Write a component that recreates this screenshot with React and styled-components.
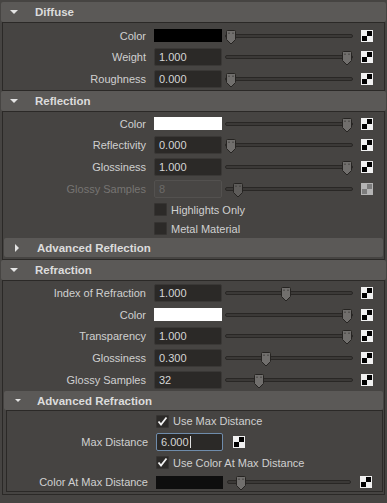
import React from "react";
import styled, { createGlobalStyle } from "styled-components";

const C = {
  bg: "#464442",
  header: "#5b5957",
  line: "#2b2927",
  field: "#2b2927",
  fieldBorder: "#3a3836",
  text: "#d0d0d0",
  headText: "#dcdcdc",
  dim: "#767472",
};

const Global = createGlobalStyle`
  html, body { margin: 0; padding: 0; background: ${C.bg}; }
  body {
    font-family: "Liberation Sans", Arial, sans-serif;
    font-size: 11px;
    color: ${C.text};
  }
`;

const Page = styled.div`
  width: 387px;
  height: 503px;
  overflow: hidden;
  box-sizing: border-box;
  padding-top: 2px;
  background: ${C.bg};
  display: flex;
  flex-direction: column;
`;

const Header = styled.div`
  flex: none;
  height: ${(p) => p.$h}px;
  margin: 0 1px;
  padding-left: ${(p) => p.$pl}px;
  background: ${C.header};
  border-radius: 2px;
  display: flex;
  align-items: center;
  font-weight: bold;
  font-size: 11.5px;
  color: ${C.headText};
`;

const ArrowBox = styled.div`
  flex: none;
  width: ${(p) => p.$w}px;
  display: flex;
  align-items: center;
`;

const Arrow = styled.span`
  width: 0;
  height: 0;
  ${(p) =>
    p.$open
      ? `border-left: ${p.$s}px solid transparent; border-right: ${p.$s}px solid transparent; border-top: ${p.$s}px solid #e4e4e4;`
      : `border-top: 4px solid transparent; border-bottom: 4px solid transparent; border-left: 4px solid #e4e4e4;`}
`;

const Body = styled.div`
  flex: none;
  margin: 0 ${(p) => p.$mr}px 0 ${(p) => p.$ml}px;
  border: 1px solid ${C.line};
  padding: ${(p) => p.$pt}px 0 ${(p) => p.$pb}px 0;
  display: flex;
  flex-direction: column;
`;

const Row = styled.div`
  flex: none;
  height: ${(p) => p.$h}px;
  display: flex;
  align-items: center;
`;

const Label = styled.div`
  flex: none;
  width: ${(p) => p.$w}px;
  margin-right: 8px;
  text-align: right;
  white-space: nowrap;
  color: ${(p) => (p.$disabled ? C.dim : C.text)};
`;

const Field = styled.div`
  flex: none;
  width: ${(p) => p.$w}px;
  height: 18px;
  box-sizing: border-box;
  padding-left: 4px;
  display: flex;
  align-items: center;
  border-radius: 2px;
  background: ${(p) => (p.$disabled ? "#484644" : C.field)};
  border: 1px solid
    ${(p) => (p.$focus ? "#6f8cab" : p.$disabled ? "#53514f" : C.fieldBorder)};
  color: ${(p) => (p.$disabled ? "#6c6a68" : "#d6d6d6")};
`;

const Caret = styled.span`
  width: 1px;
  height: 12px;
  background: #e0e0e0;
  margin-left: 1px;
`;

const Swatch = styled.div`
  flex: none;
  width: ${(p) => p.$w}px;
  height: 13px;
  background: ${(p) => p.$c};
`;

const SliderBox = styled.div`
  flex: none;
  position: relative;
  width: ${(p) => p.$w}px;
  height: 100%;
  box-sizing: border-box;
  padding: 0 ${(p) => p.$inset}px;
  display: flex;
  align-items: center;
`;

const Track = styled.div`
  flex: 1;
  height: 4px;
  box-sizing: border-box;
  border: 1px solid #292725;
  background: #3b3937;
  border-radius: 2px;
`;

const ThumbWrap = styled.div`
  position: absolute;
  top: 50%;
  margin-top: -6px;
  width: 10px;
  height: 15px;
  display: flex;
`;

const IconBox = styled.div`
  flex: none;
  margin-left: ${(p) => p.$ml}px;
  width: 12px;
  height: 12px;
  display: flex;
`;

const CheckRow = styled.div`
  flex: none;
  height: ${(p) => p.$h}px;
  padding-left: ${(p) => p.$indent}px;
  display: flex;
  align-items: center;
`;

const Box = styled.div`
  flex: none;
  width: 13px;
  height: 13px;
  box-sizing: border-box;
  border: 1px solid #363432;
  background: #2c2a28;
  border-radius: 1px;
  margin-right: 4px;
  display: flex;
  align-items: center;
  justify-content: center;
`;

const CheckText = styled.span`
  color: ${C.text};
  white-space: nowrap;
`;

const Gap = styled.div`
  flex: none;
  height: ${(p) => p.$h}px;
`;

function Thumb({ disabled }) {
  return (
    <svg width="10" height="15" viewBox="0 0 10 15">
      <path
        d="M1.5 0.5 H8.5 Q9.5 0.5 9.5 1.5 V9.5 L5 14 L0.5 9.5 V1.5 Q0.5 0.5 1.5 0.5Z"
        fill={disabled ? "#5e5c5a" : "#716f6d"}
        stroke="#262422"
      />
      <path d="M3 2.5v1.5M7 2.5v1.5" stroke="#3a3836" />
    </svg>
  );
}

function Slider({ value, width = 134, inset = 3, disabled }) {
  const travel = width - 2 * inset - 12;
  return (
    <SliderBox $w={width} $inset={inset}>
      <Track />
      <ThumbWrap style={{ left: inset + 1 + value * travel }}>
        <Thumb disabled={disabled} />
      </ThumbWrap>
    </SliderBox>
  );
}

function MapIcon({ ml = 5, disabled }) {
  const light = disabled ? "#b4b4b4" : "#f0f0f0";
  const dark = disabled ? "#7c7c7c" : "#000";
  return (
    <IconBox $ml={ml}>
      <svg width="12" height="12" viewBox="0 0 12 12">
        <rect width="12" height="12" fill={light} />
        <rect x="6" y="1" width="5" height="5" fill={dark} />
        <rect x="1" y="6" width="5" height="5" fill={dark} />
      </svg>
    </IconBox>
  );
}

function Check({ checked }) {
  return (
    <Box>
      {checked && (
        <svg width="11" height="11" viewBox="0 0 11 11">
          <polyline
            points="1.5,5.5 4,8.5 9.5,1.5"
            fill="none"
            stroke="#f2f2f2"
            strokeWidth="1.8"
          />
        </svg>
      )}
    </Box>
  );
}

function SectionHeader({ title, open = true, nested }) {
  return nested ? (
    <Header $h={19} $pl={11}>
      <ArrowBox $w={22}>
        <Arrow $open={open} $s={3} />
      </ArrowBox>
      {title}
    </Header>
  ) : (
    <Header $h={20} $pl={9}>
      <ArrowBox $w={25}>
        <Arrow $open={open} $s={4} />
      </ArrowBox>
      {title}
    </Header>
  );
}

const LW = 143;
const FW = 68;

function ValueRow({ label, value, slider, disabled }) {
  return (
    <Row $h={22}>
      <Label $w={LW} $disabled={disabled}>{label}</Label>
      <Field $w={FW} $disabled={disabled}>{value}</Field>
      <Slider value={slider} disabled={disabled} />
      <MapIcon disabled={disabled} />
    </Row>
  );
}

function ColorRow({ label, color, slider }) {
  return (
    <Row $h={21}>
      <Label $w={LW}>{label}</Label>
      <Swatch $w={FW} $c={color} />
      <Slider value={slider} />
      <MapIcon />
    </Row>
  );
}

export default function App() {
  return (
    <>
      <Global />
      <Page>
        <SectionHeader title="Diffuse" />
        <Body $ml={2} $mr={2} $pt={2} $pb={0}>
          <ColorRow label="Color" color="#000" slider={0} />
          <ValueRow label="Weight" value="1.000" slider={1} />
          <ValueRow label="Roughness" value="0.000" slider={0} />
        </Body>

        <SectionHeader title="Reflection" />
        <Body $ml={2} $mr={2} $pt={1} $pb={2}>
          <ColorRow label="Color" color="#ffffff" slider={1} />
          <ValueRow label="Reflectivity" value="0.000" slider={0} />
          <ValueRow label="Glossiness" value="1.000" slider={1} />
          <ValueRow label="Glossy Samples" value="8" slider={0.06} disabled />
          <CheckRow $h={19} $indent={LW + 8}>
            <Check />
            <CheckText>Highlights Only</CheckText>
          </CheckRow>
          <CheckRow $h={19} $indent={LW + 8}>
            <Check />
            <CheckText>Metal Material</CheckText>
          </CheckRow>
          <SectionHeader title="Advanced Reflection" open={false} nested />
        </Body>

        <SectionHeader title="Refraction" />
        <Body $ml={2} $mr={2} $pt={1} $pb={2}>
          <ValueRow label="Index of Refraction" value="1.000" slider={0.47} />
          <ColorRow label="Color" color="#ffffff" slider={1} />
          <ValueRow label="Transparency" value="1.000" slider={1} />
          <ValueRow label="Glossiness" value="0.300" slider={0.3} />
          <ValueRow label="Glossy Samples" value="32" slider={0.24} />
          <SectionHeader title="Advanced Refraction" nested />
          <Body $ml={3} $mr={1} $pt={0} $pb={0}>
            <CheckRow $h={20} $indent={149}>
              <Check checked />
              <CheckText>Use Max Distance</CheckText>
            </CheckRow>
            <Row $h={21}>
              <Label $w={141}>Max Distance</Label>
              <Field $w={67} $focus>
                6.000
                <Caret />
              </Field>
              <MapIcon ml={10} />
            </Row>
            <CheckRow $h={21} $indent={149}>
              <Check checked />
              <CheckText>Use Color At Max Distance</CheckText>
            </CheckRow>
            <Row $h={18}>
              <Label $w={141}>Color At Max Distance</Label>
              <Swatch $w={67} $c="#0e0e0e" />
              <Slider value={0.07} width={132} inset={4} />
              <MapIcon />
            </Row>
          </Body>
          <Gap $h={0} />
        </Body>
      </Page>
    </>
  );
}
